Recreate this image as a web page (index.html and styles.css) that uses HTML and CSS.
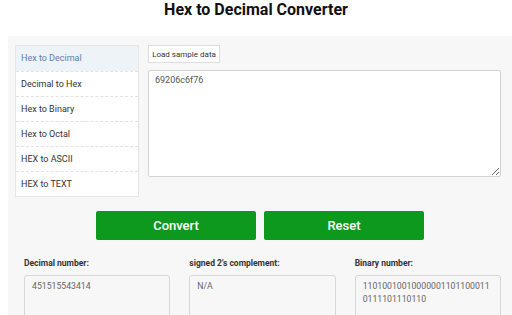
FILE: index.html
```html
<!DOCTYPE html>
<html lang="en">
<head>
  <meta charset="UTF-8" />
  <meta name="viewport" content="width=device-width, initial-scale=1.0" />
  <title>Hex to Decimal Converter</title>
  <link rel="stylesheet" href="styles.css">
</head>
<body>
  <h1 class="page-title">Hex to Decimal Converter</h1>

  <div class="tool-box">
    <div class="tool-top">
      <!-- Converter list -->
      <ul class="side-menu">
        <li class="active">Hex to Decimal</li>
        <li>Decimal to Hex</li>
        <li>Hex to Binary</li>
        <li>Hex to Octal</li>
        <li>HEX to ASCII</li>
        <li>HEX to TEXT</li>
      </ul>

      <!-- Input -->
      <div class="input-col">
        <button class="btn-sample">Load sample data</button>
        <textarea class="hex-input">69206c6f76</textarea>
      </div>
    </div>

    <div class="actions">
      <button class="btn-green">Convert</button>
      <button class="btn-green">Reset</button>
    </div>

    <!-- Results -->
    <div class="results">
      <div class="result">
        <label>Decimal number:</label>
        <div class="result-box">451515543414</div>
      </div>
      <div class="result">
        <label>signed 2's complement:</label>
        <div class="result-box">N/A</div>
      </div>
      <div class="result">
        <label>Binary number:</label>
        <div class="result-box">110100100100000011011000110111101110110</div>
      </div>
    </div>
  </div>
</body>
</html>
```

FILE: styles.css
```css
/* Reset & Base */
*, *::before, *::after { box-sizing: border-box; margin: 0; padding: 0; }
html, body { font-family: Roboto, Arial, sans-serif; background: #fff; color: #333; overflow: hidden; }
button { cursor: pointer; font-family: inherit; }

/* Title */
.page-title { height: 36px; padding-top: 1px; text-align: center; font-size: 16px; font-weight: 700; color: #111; line-height: 18px; }

/* Panel */
.tool-box { margin-left: 8px; background: #f7f7f7; padding: 9px 11px 40px 7px; }
.tool-top { display: flex; gap: 9px; }

/* Side menu */
.side-menu { list-style: none; width: 124px; background: #fff; border: 1px solid #e6e6e6; }
.side-menu li { height: 25px; line-height: 24px; padding-left: 5px; font-size: 9px; color: #333; border-top: 1px dashed #e2e2e2; }
.side-menu li:first-child { border-top: none; }
.side-menu li.active { background: #eef3f8; color: #5d7fa3; }

/* Input column */
.input-col { flex: 1; display: flex; flex-direction: column; align-items: flex-start; gap: 7px; }
.btn-sample { height: 18px; width: 72px; background: #fff; border: 1px solid #ddd; font-size: 8px; color: #333; }
.hex-input { width: 100%; height: 107px; border: 1px solid #d3d3d3; border-radius: 2px; padding: 4px 6px; font-family: Roboto, Arial, sans-serif; font-size: 9px; color: #555; resize: vertical; background: #fff; }

/* Buttons */
.actions { display: flex; justify-content: center; gap: 8px; margin-top: 14px; padding-left: 4px; }
.btn-green { width: 160px; height: 29px; background: #0c991e; color: #fff; border: none; border-radius: 2px; font-size: 13px; font-weight: 500; }

/* Results */
.results { display: grid; grid-template-columns: repeat(3, 1fr); gap: 19px; margin-top: 18px; padding-left: 9px; }
.result label { display: block; font-size: 8.5px; font-weight: 700; color: #333; margin-bottom: 7px; }
.result-box { height: 60px; border: 1px solid #d8d8d8; border-radius: 3px; padding: 4px 7px; font-size: 8.7px; line-height: 13px; color: #666; word-break: break-all; }
```
